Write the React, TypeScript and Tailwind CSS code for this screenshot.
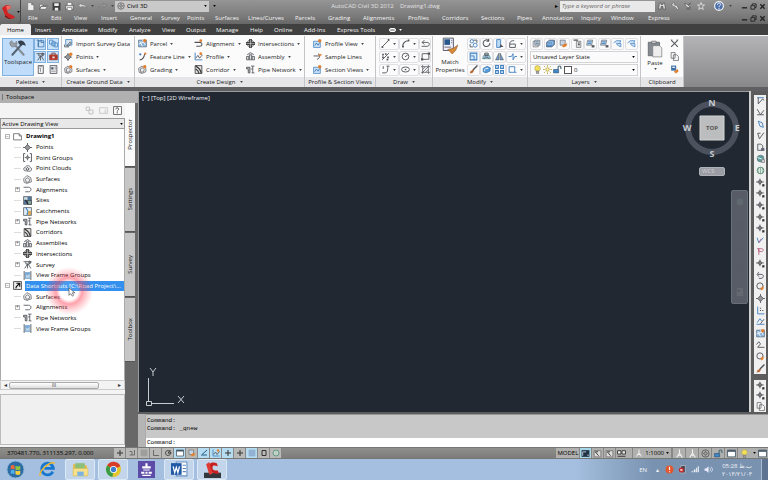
import React from "react";

const K = "#50545a";
const B = "#3f7fc0";
const O = "#e08030";
const line = { fill: "none", stroke: K, strokeWidth: 1.6 };
const blue = { fill: "none", stroke: B, strokeWidth: 1.6 };

const glyphs: Record<string, React.ReactNode> = {
  new: <path d="M3 1h7l4 4v10H3z M10 1v4h4" fill="#eee" stroke="#666" />,
  open: <path d="M1 13V4h5l1 2h6v2H4zM1 13h11l3-6H4z" fill="#eee" stroke="#555" />,
  save: <g><path d="M1 1h14v14H1z" fill="#3c3c3c" /><path d="M4 2h8v5H4zM5 10h6v5H5z" fill="#eee" /></g>,
  print: <g><path d="M1 6h14v7H1z" fill="#ddd" stroke="#444" /><path d="M4 1h8v5H4zM4 10h8v5H4z" fill="#fff" stroke="#555" /></g>,
  undo: <path d="M1 6l5-4v2.500c5 0 8 2 9 6-2-2-5-3-9-2.500V10z" fill="#ddd" stroke="#555" strokeWidth=".6" />,
  redo: <path d="M15 6l-5-4v2.500c-5 0-8 2-9 6 2-2 5-3 9-2.500V10z" fill="#999" stroke="#666" strokeWidth=".6" />,
  gear: <g fill="none" stroke="#555" strokeWidth="1.400"><circle cx="8" cy="8" r="6.500" /><circle cx="8" cy="8" r="2.500" /><path d="M8 3v2M8 11v2M3 8h2M11 8h2" /></g>,
  binoculars: <path d="M3 2h3v3h4V2h3l2 12h-5v-5H6v5H1z" fill="#ddd" stroke="#333" />,
  key: <path d="M2 5a4 4 0 0 1 6-3L6 5l2 2 3-1 4 7-2 2-6-6a4 4 0 0 1-5-4z" fill="#ddd" stroke="#444" strokeWidth=".8" />,
  dish: <path d="M2 2c0 7 5 10 11 9L9 7l4-5-5 4zM5 14h8" fill="#ddd" stroke="#333" />,
  star: <path d="M8 1l2 5h5l-4 3.500 1.500 5.500L8 12l-4.500 3L5 9.500 1 6h5z" fill="none" stroke="#eee" strokeWidth="1.500" />,
  help: <g><circle cx="8" cy="8" r="7" fill="#4a6ea8" stroke="#eee" strokeWidth="2" /><path d="M5.500 6c0-4 6-3 5 0-.5 1.500-2.500 1.500-2.500 4M8 11.500v2" stroke="#fff" strokeWidth="1.600" fill="none" /></g>,
  min: <path d="M2 11h12" stroke="#222" strokeWidth="3" />,
  restore: <path d="M5 5V2h9v8h-3M2 6h9v8H2z" fill="none" stroke="#222" strokeWidth="2" />,
  close: <path d="M3 3l10 10M13 3L3 13" stroke="#222" strokeWidth="3" />,
  tools: <g strokeLinecap="round"><path d="M5 5l8 9" stroke="#878f98" strokeWidth="2" /><path d="M2 1.500a3 3 0 0 0 3.500 5 3 3 0 0 0 1-4.500L5.500 4 4 3.500z" fill="#98a0a9" stroke="#666" strokeWidth=".4" /><path d="M11 5L3 14" stroke="#566170" strokeWidth="1.800" /><path d="M8 2c3-1.500 6 0 7 4l-3-1-1.500 1-2-2z" fill="#34404e" /></g>,
  survey: <g><path d="M3 1h11v10H3z" fill="#dce9f5" stroke={B} strokeWidth="1.400" /><path d="M5 12l6-7 2 2-5 6zM1 10v4h8" fill="none" stroke={K} strokeWidth="1.500" /></g>,
  panel: <g><path d="M4 3h10v11H4z" fill="#c8e0f6" stroke={B} strokeWidth="1.500" /><path d="M1 2h4v4M4 6v8M9 1v5h5" fill="none" stroke="#36679a" strokeWidth="1.500" /></g>,
  panel2: <g><path d="M1 2h6v7H1zM5 5h6v7H5zM9 7h6v7H9z" fill="#d4e7f8" stroke={B} strokeWidth="1.400" /></g>,
  transit: <g stroke={K} strokeWidth="1.500" fill="none"><path d="M1 3h14M5 3v4h7V2M8 7L3 15M9 7l5 8M8 7v8" /><circle cx="12" cy="4" r="2" fill="#888" /></g>,
  toolbox: <g><path d="M1 5h14v9H1z" fill="#c5372c" stroke="#842" /><path d="M5 5V2h6v3M1 9h14" fill="none" stroke="#733" strokeWidth="1.500" /><path d="M6 8h4v3H6z" fill="#eee" /></g>,
  book: <g><path d="M4 1h9v14H4z" fill="#f4f4f4" stroke={K} strokeWidth="1.500" /><path d="M6 3h5M6 6h2v6" stroke={K} fill="none" /></g>,
  sheet: <g><path d="M2 1h12v14H2z" fill="#eee" stroke="#556" strokeWidth="1.500" /><path d="M4 4h4v4H4z" fill="#456" /><path d="M10 4h3M10 7h3M4 11h8" stroke="#556" /></g>,
  points: <g><path d="M8 0v16M0 8h16" stroke={K} strokeWidth="1.500" /><path d="M8 3l5 5-5 5-5-5z" fill="#999" stroke={K} strokeWidth="1.600" /></g>,
  pointsnew: <g><path d="M7 2v14M0 9h14" stroke={K} strokeWidth="1.500" /><path d="M7 4l5 5-5 5-5-5z" fill="#999" stroke={K} strokeWidth="1.500" /><circle cx="12" cy="4" r="3" fill={O} /></g>,
  surface: <path d="M1 7l6-6 7 4 1 7-8 3-5-2zM4 8l4-3 4 3-1 4-5 1z" fill="#f2f2f2" stroke={K} strokeWidth="1.200" />,
  surfacenew: <g><path d="M1 6l6-4 7 4v6l-7 3-5-2zM4 7l4-2 3 3-1 4-5 1z" fill="#eee" stroke={K} strokeWidth="1.200" /><circle cx="12" cy="3" r="3" fill={O} /></g>,
  parcel: <g><path d="M1 2h14v12H1z" fill="#8db5dc" stroke="#456" /><path d="M3 4l5 9M8 2l5 9M1 9l12-5" stroke="#fff" strokeWidth="1.500" /><circle cx="12" cy="3" r="3" fill={O} /></g>,
  feature: <g><path d="M3 14c6 0 8-5 9-11" fill="none" stroke={K} strokeWidth="1.800" /><circle cx="4" cy="4" r="2" fill={B} /><circle cx="13" cy="3" r="2" fill={O} /></g>,
  align: <path d="M1 4h9c6 0 5 8 0 8H4" fill="none" stroke={K} strokeWidth="1.500" />,
  alignnew: <g><path d="M1 6h9c6 0 5 7 0 7H4" {...line} strokeWidth="1.800" /><circle cx="12" cy="3" r="2.500" fill={O} /></g>,
  profile: <g><path d="M2 1v13h13" {...blue} /><path d="M3 11l4-5 3 5 5-6" {...line} /><circle cx="12" cy="3" r="2.500" fill={O} /></g>,
  corridor: <g><path d="M2 1h12v14H2z" fill="#ddd" stroke="#444" strokeWidth="1.500" /><path d="M3 2c6 3 9 7 10 13M3 7c4 2 5 4 6 8" stroke="#333" strokeWidth="2" fill="none" /></g>,
  intersection: <g><circle cx="8" cy="8" r="6" fill="none" stroke="#666" strokeWidth="1.500" /><path d="M8 0v16M0 8h16" stroke="#444" strokeWidth="5" /><path d="M8 1v14M1 8h14" stroke="#ddd" strokeWidth="1" /></g>,
  assembly: <g><path d="M1 14V8h4v6zM6 14V5h4v9zM11 14V8h4v6zM2 5l6-4 6 4" fill="#ddd" stroke={K} strokeWidth="1.400" /></g>,
  pipes: <path d="M1 4h6v10H4V7H1zM9 2h6M12 2v12M9 7h3M10 14h5" fill="#bbb" stroke={K} strokeWidth="1.500" />,
  profileview: <g><path d="M1 4h12v11H1z" fill="#cfe3f7" stroke={B} strokeWidth="1.300" /><path d="M3 12l3-5 3 4 3-5" {...blue} /><circle cx="12" cy="3" r="3" fill={O} /></g>,
  sample: <g><path d="M1 7h11M9 3c4 1 4 9-2 10" {...line} /><path d="M10 5h5" stroke={O} strokeWidth="3" /></g>,
  line: <g><path d="M2 14L14 2" {...line} /><path d="M1 13h3v3H1zM12 0h3v3h-3z" fill={K} /></g>,
  arc: <g><path d="M3 14C3 6 7 3 14 3" {...line} strokeWidth="2" /><path d="M2 12h3v3H2zM12 1h3v3h-3z" fill={K} /></g>,
  poly: <path d="M1 13h10c5 0 5-7 0-7H2l4-4M2 6l4 4" {...line} />,
  scatter: <g><path d="M2 14L14 2" {...line} /><path d="M2 3h3v3H2zM7 2h3v3H7zM2 8h3v3H2zM11 8h3v3h-3zM10 12h3v3h-3z" fill={K} /></g>,
  circle: <g><circle cx="8" cy="8" r="6" {...line} /><circle cx="8" cy="8" r="1" fill={K} /><path d="M8 8l4-3" {...line} /></g>,
  rect: <g><path d="M2 3h12v10H2z" {...line} /><path d="M0 11h4v4H0zM12 1h4v4h-4z" fill={K} /></g>,
  curve: <path d="M2 14h5c5 0 5-5 5-12M4 2v5M10 2h5" {...line} />,
  ellipse: <g><ellipse cx="8" cy="8" rx="7" ry="4.500" {...line} /><circle cx="8" cy="8" r="1.500" fill={K} /></g>,
  hatch: <path d="M3 0v16M13 0v16M0 3h16M0 13h16M3 8l5-5M3 13L13 3M8 13l5-5" {...line} strokeWidth="1.300" />,
  match: <g><path d="M2 1h9v11H2z" fill="#eef" stroke={K} strokeWidth=".8" /><path d="M3 2h5v5H3z" fill="#28588c" /><path d="M9 3h1M9 5h1M3 9h6" stroke={K} strokeWidth=".7" /><path d="M6 11l5-1 4-3-2 5-3 3-2-2z" fill="#d78a35" stroke="#853" strokeWidth=".5" /></g>,
  move: <g><circle cx="5" cy="4" r="3" {...blue} /><circle cx="11" cy="11" r="3.500" {...blue} /><path d="M8 2h6v5M2 9v5h5" {...line} /></g>,
  rotate: <path d="M12 3a6 6 0 1 0 2 4M12 0v4H8" {...line} strokeWidth="1.800" />,
  trim: <g><path d="M3 1h7v14H3z" fill="#bcdcf6" stroke={B} strokeWidth="1.500" /><path d="M10 9l5 5H8z" fill={K} /></g>,
  stretch: <g><path d="M2 2h12v12H2z" fill="#d5e9fa" stroke={B} strokeWidth="1.800" /><path d="M2 7h7v7" {...blue} /></g>,
  copy: <g><path d="M1 12c1-6 3-8 7-8s6 2 7 8z" fill="#9fc5e8" stroke="#376" /><path d="M4 12c0-4 8-4 8 0M5 6h6V2H5z" {...line} /></g>,
  mirror: <path d="M7 2L1 14h6zM9 2l6 12H9z" fill="#6f9cc8" stroke={K} />,
  brush: <g><path d="M15 1L7 9" stroke={K} strokeWidth="2.500" /><path d="M7 8l2 2-3 4-5 1 2-4z" fill="#b86835" /></g>,
  offset: <g><path d="M2 6l7-4 6 3-1 6-7 3-5-2z" fill="#5a9bd8" stroke="#2465a0" /><path d="M4 11c0-5 4-5 7-5" stroke="#fff" fill="none" strokeWidth="1.500" /></g>,
  array: <path d="M1 1h5v5H1zM10 1h5v5h-5zM1 10h5v5H1zM10 10h5v5h-5z" fill="#cfe5f8" stroke={B} strokeWidth="1.800" />,
  fillet: <g><path d="M3 15V9c0-5 3-6 8-6M3 9h10v6H3" {...line} /></g>,
  breakl: <path d="M1 8h5l3-5v11l3-6h4" {...blue} />,
  box: <path d="M2 3h10v10H2zM12 13h3" {...blue} />,
  layers: <g><path d="M2 4h9v10H2z" fill="#e7edf3" stroke={K} /><path d="M5 2h9v9H5z" fill="#b9cfe4" stroke={K} /><path d="M7 5h5M7 8h5" stroke={K} /></g>,
  layerb: <g><path d="M1 6l5-4h9v8l-5 4H1z" fill="#5b91c9" stroke="#345" /><path d="M4 5h8v6M2 9h8" stroke="#d5e7f8" fill="none" /></g>,
  layero: <g><path d="M2 2h9v9H2z" fill="#c5d4e2" stroke={K} /><path d="M5 12l4-3 6-1-2 5-5 2z" fill={O} /></g>,
  layerp: <g><path d="M6 4h8v11H6z" fill="#ddd" stroke={K} /><path d="M1 2h8M9 7h3M9 10h3" stroke={K} strokeWidth="2" /></g>,
  layera: <g><path d="M3 2h9l-2 9H1z" fill="#b9cfe4" stroke={K} /><path d="M4 5h6M3 8h6" stroke={B} strokeWidth="1.500" /><path d="M10 11h5v4h-5z" fill={K} /></g>,
  layerl: <g><path d="M1 7l5-4h8l-2 4M6 8h8v6l-6-3z" fill="#cfe3f7" stroke={B} strokeWidth="1.300" /></g>,
  bulb: <g><circle cx="8" cy="6" r="5" fill="#f5df55" stroke="#997" /><path d="M6 11h4v4H6z" fill="#aaa" stroke="#666" /></g>,
  sun: <g stroke="#b8a13c" strokeWidth="1.500"><circle cx="8" cy="8" r="3" fill="#fff7b0" /><path d="M8 0v3M8 13v3M0 8h3M13 8h3M2 2l2 2M12 12l2 2M14 2l-2 2M4 12l-2 2" /></g>,
  lock: <g><path d="M1 8h9v6H1z" fill="#3e88c8" stroke="#246" /><path d="M9 8V4c0-3 5-3 5 0v3" fill="none" stroke="#467" strokeWidth="2" /></g>,
  paste: <g><path d="M2 2h10v12H2z" fill="#858b92" stroke="#555" strokeWidth=".6" /><path d="M5 1h4v2H5z" fill="#ccc" stroke="#555" strokeWidth=".5" /><path d="M6 5h6l2 2v8H6z" fill="#eee" stroke="#777" strokeWidth=".6" /></g>,
  cut: <g><path d="M2 2l12 12M14 2L2 14" stroke={K} strokeWidth="1.800" /><path d="M1 1h3v3M15 1h-3v3" fill="none" stroke="#999" /></g>,
  copies: <path d="M2 1h7v10H2zM6 5h6l3 3v7H6z" fill="#fafafa" stroke={K} strokeWidth="1.200" />,
  pastes: <g><path d="M2 1h9v9H2z" fill="#3d70a8" /><path d="M4 3h5v2H4z" fill="#fff" /><path d="M7 11l7-4 1 5-5 3z" fill={O} /></g>,
  doc: <path d="M1 3h10l4 4v7H1zM11 3v4h4" fill="#fff" stroke="#555" strokeWidth="1.300" />,
  group: <g><path d="M4 1H1v14h3M12 1h3v14h-3" {...line} /><path d="M8 3v10M3 8h10" stroke={K} strokeWidth="1.300" /><path d="M8 5l3 3-3 3-3-3z" fill="#888" stroke={K} /></g>,
  cloud: <g><path d="M3 12c-3-2-2-6 1-6 1-4 8-4 9 0 3 1 3 5 0 7z" fill="#eee" stroke={K} strokeWidth="1.300" /><path d="M5 9l3-3 3 3-3 2z" {...line} /></g>,
  sites: <g><path d="M1 1h14v14H1z" fill="#54779c" stroke="#444" /><path d="M2 2h6v5H2z" fill="#cdd" /><path d="M8 8h7v7H8z" fill="#86a7a0" stroke="#333" /><path d="M4 7l5 7" stroke="#222" strokeWidth="2" /></g>,
  catchment: <g><path d="M1 1h14v14H1z" fill="#dcecf8" stroke="#555" strokeWidth="1.300" /><path d="M5 1l4 7-2 6" fill="none" stroke={B} strokeWidth="2" /><path d="M9 7h5v7H9z" fill="#d9a44a" /></g>,
  frame: <g><path d="M3 2h10v12H3z" fill="#7ba9d4" /><path d="M5 6l3 2 4-3v7H5z" fill="#bcd3e8" /><path d="M2 0v16M14 0v16" stroke="#555" strokeWidth="1.500" /></g>,
  shortcut: <g><path d="M1 1h14v14H1z" fill="#eee" stroke="#444" strokeWidth="1.500" /><path d="M6 4h6v6M12 4l-6 6-1 3" fill="none" stroke="#111" strokeWidth="2" /></g>,
  helpbox: <g><path d="M1 1h14v14H1z" fill="#fff" stroke="#555" strokeWidth="1.500" /><path d="M5 6c0-4 6-3 5 0-.5 1.500-2.500 1.500-2.500 4M7.500 11v2" stroke="#333" strokeWidth="1.600" fill="none" /></g>,
  faded: <path d="M2 2h6v6H2zM7 7h7v7H7z" fill="none" stroke="#bbb" strokeWidth="1.500" />,
  faded2: <path d="M1 3h14v10H1zM11 6v7" fill="none" stroke="#c5c5c5" strokeWidth="1.500" />,
  globe: <g><circle cx="8" cy="8" r="6" fill="#5e9c9b" stroke="#566" /><path d="M3 6c4 3 7 1 9 5" stroke="#cee" strokeWidth="2" fill="none" /><path d="M10 10h5v5h-5z" fill="#ddd" stroke="#555" /></g>,
  globe2: <g><circle cx="8" cy="8" r="6" fill="#dde8dd" stroke="#587" strokeWidth="1.500" /><path d="M8 2v12M5 3c-2 3-2 7 0 10M11 3c2 3 2 7 0 10" stroke="#587" fill="none" /></g>,
  flag: <g><path d="M2 3h12" {...blue} /><path d="M4 3v11l8-9 2 3" {...line} /></g>,
  angle: <path d="M2 2l6 10H2M8 12l6-8M8 12h6" {...line} />,
  tag: <path d="M4 2l7 3 2 8-6-2z" {...blue} />,
  ang2: <path d="M3 4l3 10 8-11M3 4h5" {...line} />,
  page: <g><path d="M3 2h6l3 3v8H3z" fill="#eee" stroke={K} strokeWidth="1.500" /><path d="M9 9h6v5H9z" fill="#667" /></g>,
  pt: <g><path d="M7 1v12M0 7h14" stroke={K} strokeWidth="1.300" /><path d="M7 3l4 4-4 4-4-4z" fill="#777" stroke={K} strokeWidth="1.500" /><path d="M11 11h4v4h-4z" fill="#333" /></g>,
  pen: <g><path d="M2 3l3 9 8-9" {...blue} /><path d="M5 12l4-7" stroke="#b8657d" strokeWidth="1.500" /></g>,
  pink: <path d="M2 3h8c4 0 4 5 0 5H5V3v11" fill="none" stroke="#b8657d" strokeWidth="1.600" />,
  back: <path d="M3 6h6c6 0 5 7 0 7H5M5 2L2 6l3 4" {...line} />,
  dots: <g><path d="M3 1v13h12" {...blue} /><path d="M7 7h2v2H7zM11 7h2v2h-2zM7 3h2v2H7z" fill={K} /></g>,
  zig: <path d="M1 8l4-5 3 4-5 6h12" {...line} />,
  zigb: <g><path d="M1 13h14M2 10l5-7 3 4" {...blue} /><path d="M8 12l6-8" {...line} /></g>,
  palette: <g><circle cx="7" cy="7" r="5.500" {...line} /><path d="M8 10l6-2-1 5-4 2z" fill={O} /></g>,
  plus: <path d="M8 2v12M2 8h12" stroke="#333" strokeWidth="2" />,
  grid: <path d="M2 2h12v12H2zM6 2v12M10 2v12M2 6h12M2 10h12" fill="#a8c8e8" stroke="#6b8bab" strokeWidth=".8" />,
  gridoff: <path d="M2 2h12v12H2zM6 2v12M10 2v12M2 6h12M2 10h12" fill="#aaa" stroke="#888" strokeWidth=".8" />,
  snap: <path d="M13 2v10H3M3 5h5v7" fill="none" stroke="#666" strokeWidth="1.800" />,
  sq: <path d="M4 3h8v10H4z" fill="none" stroke="#333" strokeWidth="2" />,
  ell: <path d="M3 2v11h11" fill="none" stroke="#555" strokeWidth="1.600" />,
  polar: <g><circle cx="8" cy="8" r="5" fill="none" stroke="#444" strokeWidth="1.800" /><path d="M8 8h7M8 8l5-6" stroke="#333" strokeWidth="1.800" /></g>,
  slope: <path d="M14 2L3 12h11" fill="none" stroke="#245a86" strokeWidth="2" />,
  window: <g><path d="M1 2h14v12H1z" fill="#fff" stroke="#456" strokeWidth="1.500" /><path d="M1 2h14v3H1z" fill="#456" /></g>,
  views: <path d="M1 3h6v6H1zM9 3h6v6H9zM1 13h14" fill="#eee" stroke="#333" strokeWidth="1.600" />,
  layout: <g><path d="M2 3h12v11H2z" fill="#ddd" stroke="#666" strokeWidth="1.300" /><path d="M4 5l6 7M4 5h5" stroke="#333" strokeWidth="1.600" fill="none" /></g>,
  dark: <g><path d="M1 2h14v12H1z" fill="#234" /><path d="M3 5h6M3 5v7M11 11h3" stroke="#cde" strokeWidth="1.500" /></g>,
  person: <path d="M8 1v6M8 7L3 15M8 7l5 8M5 11h6" fill="none" stroke="#f4f4f4" strokeWidth="1.800" />,
  ie: <g><path d="M13 10a5.500 5.500 0 1 1 .5-3H5" fill="none" stroke="#1878cf" strokeWidth="2.600" /><path d="M1 14C0 9 10 0 15 2" fill="none" stroke="#eeb629" strokeWidth="1.300" /></g>,
  folder: <g><path d="M1 3h5l1 1h7v10H1z" fill="#e2b94e" /><path d="M3 2h9v6H3z" fill="#8cc07a" /><path d="M1 7h14v7H1z" fill="#f7e08c" stroke="#d7b64a" strokeWidth=".5" /><path d="M5 10h6v4H5z" fill="#7ab3e2" /></g>,
  chrome: <g><circle cx="8" cy="8" r="7" fill="#e4c62e" /><path d="M8 8L2 4.300A7 7 0 0 1 14.500 5z" fill="#d93b2b" /><path d="M8 8L2 4.300A7 7 0 0 0 7 15z" fill="#3a9d46" /><circle cx="8" cy="8" r="3.300" fill="#fff" /><circle cx="8" cy="8" r="2.500" fill="#3d7ed0" /></g>,
  purple: <g><path d="M0 0h16v16H0z" fill="#5d4ba8" /><path d="M7 2h2v3H7zM4 5h8v2H4zM5 8h6v1H5zM3 10h3v2H3zM7 10h2v2H7zM10 10h3v2h-3zM4 13h8v1H4z" fill="#fff" /></g>,
  word: <g><path d="M5 1h10v13H5z" fill="#fff" stroke="#6a91c4" /><path d="M0 2h10v11H0z" fill="#2159a6" /><path d="M2 5l1.500 6L5 6l1.500 5L8 5" fill="none" stroke="#fff" strokeWidth="1.200" /><path d="M11 4h3M11 7h3M11 10h3" stroke="#5a86c0" /></g>,
  acad: <g><path d="M0 11h16v5H0z" fill="#33383d" /><path d="M12 2C7 0 3 3 4 7c1 3 5 5 10 5l-1-3c-4 0-5-1-5-3s2-2 5-1z" fill="#c8201e" /><path d="M2 3l3-2 3 11-3 1z" fill="#e03a34" /></g>,
  logo: <g><path d="M1 4l4-3 5 1-1 3-3 1 1 3 6 3 1 2-4 1-6-4z" fill="#cf2423" /><path d="M5 2l5 0-1 3-3 1z" fill="#ef6a60" /><path d="M4 11l6 4-2 0-4-2z" fill="#8a1010" /></g>,
  alert: <g><circle cx="8" cy="8" r="7" fill="#e2572b" /><path d="M8 3v6M8 11v2" stroke="#fff" strokeWidth="2" /></g>,
  net: <g><path d="M5 1h8v13H5z" fill="#445" stroke="#ddd" /><circle cx="6" cy="9" r="4.500" fill="#c92222" /><path d="M4 7l4 4M8 7l-4 4" stroke="#fff" strokeWidth="1.500" /></g>,
  bars: <path d="M1 13h3v-2H1zM5 13h3V8H5zM9 13h2V5H9zM12 13h2V2h-2z" fill="#e8eef5" />,
  speaker: <g><path d="M1 6h3l4-4v12l-4-4H1z" fill="#eef" /><path d="M10 5c2 2 2 4 0 6M12 3c4 3 4 7 0 10" fill="none" stroke="#eef" strokeWidth="1.300" /></g>,
};

function Glyph({ name, className = "size-2" }: { name: string; className?: string }) {
  return (
    <svg viewBox="0 0 16 16" className={`shrink-0 ${className}`} aria-hidden="true">
      {glyphs[name]}
    </svg>
  );
}

function Caret({ className = "text-[#444]" }: { className?: string }) {
  return (
    <svg viewBox="0 0 4 3" className={`h-[2px] w-[3px] shrink-0 ${className}`} aria-hidden="true">
      <path d="M0 0h4L2 3z" fill="currentColor" />
    </svg>
  );
}

function Cmd({ icon, label, menu = true }: { icon: string; label: string; menu?: boolean }) {
  return (
    <button className="flex h-[13px] items-center gap-[3px] whitespace-nowrap">
      <Glyph name={icon} className="size-[9px]" />
      <span>{label}</span>
      {menu && <Caret />}
    </button>
  );
}

function Panel({ title, width, menu = true, children }: { title: string; width: string; menu?: boolean; children: React.ReactNode }) {
  return (
    <section className={`flex shrink-0 flex-col border-r border-[#c4c4c8] bg-[#fbfbfb] ${width}`}>
      <div className="flex flex-1 items-center overflow-hidden">{children}</div>
      <h2 className="flex h-[10px] items-center justify-center gap-1 whitespace-nowrap bg-[#e6e6e8]">
        {title}
        {menu && <Caret />}
      </h2>
    </section>
  );
}

function Tool({ icon, menu = false }: { icon: string; menu?: boolean }) {
  return (
    <button aria-label={icon} className="flex h-[12px] items-center gap-[2px] rounded-xs border border-[#e0e0e4] px-px">
      <Glyph name={icon} className="size-[9px]" />
      {menu && <Caret className="mx-px text-[#444]" />}
    </button>
  );
}

const menus = ["File", "Edit", "View", "Insert", "General", "Survey", "Points", "Surfaces", "Lines/Curves", "Parcels", "Grading", "Alignments", "Profiles", "Corridors", "Sections", "Pipes", "Annotation", "Inquiry", "Window", "Express"];
const tabs = ["Home", "Insert", "Annotate", "Modify", "Analyze", "View", "Output", "Manage", "Help", "Online", "Add-Ins", "Express Tools"];

function WindowButtons() {
  return (
    <div className="flex items-center gap-[2px]">
      <button aria-label="Minimize"><Glyph name="min" className="size-[7px]" /></button>
      <button aria-label="Restore"><Glyph name="restore" className="size-[7px]" /></button>
      <button aria-label="Close"><Glyph name="close" className="size-[7px]" /></button>
    </div>
  );
}

function Header() {
  return (
    <header className="bg-linear-to-b from-[#959595] via-[#787878] to-[#4a4a4a] text-[#f4f4f4]">
      <div className="flex h-[24px]">
        <button aria-label="Application menu" className="flex w-[21px] items-center justify-center rounded-br-sm border-r border-[#444] bg-linear-to-b from-[#999] to-[#666]">
          <Glyph name="logo" className="size-4" />
          <Caret className="text-black" />
        </button>
        <div className="flex min-w-0 flex-1 flex-col">
          <div className="flex h-[12px] items-center pr-[2px]">
            <div className="flex w-[94px] items-center gap-[4px] pl-[5px]">
              {["new", "open", "save", "print", "undo"].map((n) => (
                <button key={n} aria-label={n}><Glyph name={n} className="size-[9px]" /></button>
              ))}
              <Caret />
              <button aria-label="redo"><Glyph name="redo" className="size-[9px]" /></button>
              <Caret />
            </div>
            <div className="flex h-[11px] w-[94px] items-center gap-[2px] bg-[#c9c9c9] px-[2px] text-black">
              <Glyph name="gear" className="size-[8px]" />
              <select aria-label="Workspace" className="min-w-0 flex-1 appearance-none bg-transparent"><option>Civil 3D</option></select>
              <Caret className="text-black" />
            </div>
            <div className="flex min-w-0 flex-1 items-center">
              <Caret className="ml-[4px] text-black" />
              <h1 className="flex-1 whitespace-pre text-center text-[#e2e2e2]">AutoCAD Civil 3D 2012    Drawing1.dwg</h1>
              <span className="mr-[2px] text-black">▸</span>
            </div>
            <input aria-label="Search" placeholder="Type a keyword or phrase" className="h-[11px] w-[95px] bg-[#e9e9e9] px-[2px] italic text-black placeholder:text-[#666]" />
            <div className="flex w-[86px] items-center gap-[5px] pl-[3px]">
              {["binoculars", "key", "dish", "star"].map((n) => (
                <button key={n} aria-label={n}><Glyph name={n} className="size-[8px]" /></button>
              ))}
              <button aria-label="Help" className="ml-[4px]"><Glyph name="help" className="size-[10px]" /></button>
              <Caret />
            </div>
            <WindowButtons />
          </div>
          <nav className="flex h-[12px] items-center justify-between pr-[2px] pl-[7px]">
            <div className="grid grid-cols-[23px_23px_27px_29px_31px_26px_28px_33px_47px_33px_35px_45px_34px_39px_36px_25px_39px_30px_37px_30px]">
              {menus.map((m) => <button key={m} className="text-left whitespace-nowrap">{m}</button>)}
            </div>
            <WindowButtons />
          </nav>
        </div>
      </div>
      <div role="tablist" className="grid h-[11px] grid-cols-[31px_27px_36px_31px_33px_24px_30px_34px_24px_30px_33px_49px_20px] items-stretch bg-[#404040]">
        {tabs.map((t, i) => (
          <button key={t} role="tab" aria-selected={i === 0} className={i === 0 ? "rounded-t-xs bg-[#ececee] text-black" : "pl-[4px] text-left whitespace-nowrap"}>{t}</button>
        ))}
        <button aria-label="Ribbon display" className="flex items-center justify-end gap-[3px]">
          <span className="h-[4px] w-[7px] rounded-xs border border-white bg-[#aaa]" />
          <Caret className="text-white" />
        </button>
      </div>
    </header>
  );
}

function Ribbon() {
  return (
    <div className="flex h-[52px] border-t border-[#f8f8f8] bg-linear-to-b from-[#b4b4b6] to-[#88888a] text-[#222]">
      <Panel title="Palettes" width="w-[62px]">
        <button className="ml-[2px] flex h-[38px] w-[32px] flex-col items-center justify-between border border-[#7fb0e0] bg-[#bfddfa] pb-[9px]">
          <Glyph name="tools" className="size-[18px]" />
          Toolspace
        </button>
        <div className="grid grid-cols-2 gap-px">
          {["panel", "panel2", "transit", "toolbox", "book", "sheet"].map((n, i) => (
            <button key={n} aria-label={n} className={`flex size-3 items-center justify-center border ${i < 4 ? "border-[#7fb0e0] bg-[#cbe3fa]" : "border-transparent"}`}>
              <Glyph name={n} className="size-[9px]" />
            </button>
          ))}
        </div>
      </Panel>
      <Panel title="Create Ground Data" width="w-[73px]">
        <div className="pl-[2px]">
          <Cmd icon="survey" label="Import Survey Data" menu={false} />
          <Cmd icon="pointsnew" label="Points" />
          <Cmd icon="surfacenew" label="Surfaces" />
        </div>
      </Panel>
      <Panel title="Create Design" width="w-[170px]">
        <div className="grid grid-flow-col grid-cols-[56px_52px_59px] grid-rows-3 pl-[3px]">
          <Cmd icon="parcel" label="Parcel" />
          <Cmd icon="feature" label="Feature Line" />
          <Cmd icon="surfacenew" label="Grading" />
          <Cmd icon="alignnew" label="Alignment" />
          <Cmd icon="profile" label="Profile" />
          <Cmd icon="corridor" label="Corridor" />
          <Cmd icon="intersection" label="Intersections" />
          <Cmd icon="assembly" label="Assembly" />
          <Cmd icon="pipes" label="Pipe Network" />
        </div>
      </Panel>
      <Panel title="Profile & Section Views" width="w-[71px]" menu={false}>
        <div className="pl-[8px]">
          <Cmd icon="profileview" label="Profile View" />
          <Cmd icon="sample" label="Sample Lines" menu={false} />
          <Cmd icon="profileview" label="Section Views" />
        </div>
      </Panel>
      <Panel title="Draw" width="w-[57px]">
        <div className="grid grid-cols-[20px_20px_12px] gap-y-px pl-[3px]">
          <Tool icon="line" menu /><Tool icon="arc" menu /><Tool icon="poly" />
          <Tool icon="scatter" menu /><Tool icon="circle" menu /><Tool icon="rect" />
          <Tool icon="curve" menu /><Tool icon="ellipse" menu /><Tool icon="hatch" />
        </div>
      </Panel>
      <Panel title="Modify" width="w-[95px]">
        <button className="flex w-[34px] flex-col items-center pb-[2px] leading-[8px]">
          <Glyph name="match" className="mb-[3px] size-[18px]" />
          <span>Match</span>
          <span>Properties</span>
        </button>
        <div className="grid grid-cols-[13px_13px_13px_20px] gap-y-px">
          {["move", "rotate", "trim", "fillet", "stretch", "copy", "mirror", "breakl", "brush", "offset", "array", "box"].map((n, i) => (
            <Tool key={n} icon={n} menu={i % 4 === 3} />
          ))}
        </div>
      </Panel>
      <Panel title="Layers" width="w-[113px]">
        <div className="flex w-full flex-col gap-px px-[2px]">
          <div className="flex h-[12px] justify-between">
            {["layers", "layerb", "layero", "layerp", "layera", "layera", "layerl", "layerl"].map((n, i) => <Tool key={i} icon={n} />)}
          </div>
          <div className="flex h-[12px] items-center border border-[#d4d4d8] px-[2px]">
            <select aria-label="Layer state" className="flex-1 appearance-none bg-transparent"><option>Unsaved Layer State</option></select>
            <Caret className="text-black" />
          </div>
          <div className="flex h-[12px] items-center gap-px border border-[#d4d4d8] px-[2px]">
            <Glyph name="bulb" className="size-[9px]" />
            <Glyph name="sun" className="size-[9px]" />
            <Glyph name="lock" className="size-[9px]" />
            <span className="mx-px size-[8px] border border-[#555] bg-white" />
            <select aria-label="Layer" className="flex-1 appearance-none bg-transparent"><option>0</option></select>
            <Caret className="text-black" />
          </div>
        </div>
      </Panel>
      <Panel title="Clipboard" width="w-[43px]" menu={false}>
        <button className="flex w-[28px] flex-col items-center gap-px pb-[3px]">
          <Glyph name="paste" className="size-[18px]" />
          Paste
          <Caret />
        </button>
        <div className="flex flex-col gap-[4px] pl-px">
          {["cut", "copies", "pastes"].map((n) => <button key={n} aria-label={n}><Glyph name={n} className="block size-[9px]" /></button>)}
        </div>
      </Panel>
    </div>
  );
}

type Node = { icon: string; label: string; depth: number; box?: string; selected?: boolean };
const nodes: Node[] = [
  { icon: "doc", label: "Drawing1", depth: 0, box: "−" },
  { icon: "points", label: "Points", depth: 1 },
  { icon: "group", label: "Point Groups", depth: 1 },
  { icon: "cloud", label: "Point Clouds", depth: 1 },
  { icon: "surface", label: "Surfaces", depth: 1 },
  { icon: "align", label: "Alignments", depth: 1, box: "+" },
  { icon: "sites", label: "Sites", depth: 1 },
  { icon: "catchment", label: "Catchments", depth: 1 },
  { icon: "pipes", label: "Pipe Networks", depth: 1, box: "+" },
  { icon: "corridor", label: "Corridors", depth: 1 },
  { icon: "assembly", label: "Assemblies", depth: 1, box: "+" },
  { icon: "intersection", label: "Intersections", depth: 1 },
  { icon: "transit", label: "Survey", depth: 1, box: "+" },
  { icon: "frame", label: "View Frame Groups", depth: 1 },
  { icon: "shortcut", label: "Data Shortcuts [C:\\Road Project\\...", depth: 0, box: "−", selected: true },
  { icon: "surface", label: "Surfaces", depth: 1 },
  { icon: "align", label: "Alignments", depth: 1, box: "+" },
  { icon: "pipes", label: "Pipe Networks", depth: 1 },
  { icon: "frame", label: "View Frame Groups", depth: 1 },
];

function Tree() {
  return (
    <div className="relative flex-1 border-x border-[#aaa] bg-white pt-[2px]">
      <ul className="grid h-[203px] auto-rows-fr">
        {nodes.map((n, i) => (
          <li key={i} className={`flex items-center ${n.depth ? "pl-[13px]" : "pl-[3px]"}`}>
            <span className="flex w-[7px] justify-center">
              {n.box ? (
                <span className="flex size-[5px] items-center justify-center border border-[#b5b5b5] text-[5px] leading-none text-[#556]">{n.box}</span>
              ) : (
                <span className="h-px w-full bg-[#ddd]" />
              )}
            </span>
            <Glyph name={n.icon} className="ml-[2px] size-[9px]" />
            <span className={`ml-[3px] whitespace-nowrap px-px ${n.selected ? "min-w-0 flex-1 overflow-hidden bg-[#3390ee] py-px text-white" : "text-black"} ${i === 0 ? "font-bold" : ""}`}>{n.label}</span>
          </li>
        ))}
      </ul>
      <div className="pointer-events-none absolute top-[138px] left-[44px] size-12 rounded-full bg-[radial-gradient(circle,rgba(255,255,255,0.1)_0,rgba(255,255,255,0.1)_9px,rgba(255,70,90,0.5)_13px,rgba(255,70,90,0.25)_18px,transparent_24px)]" />
      <svg viewBox="0 0 8 12" className="absolute top-[158px] left-[67px] h-[10px] w-[7px]" aria-hidden="true">
        <path d="M1 1v9l2-2 2 3 1.500-1L5 7h3z" fill="#fff" stroke="#444" strokeWidth=".8" />
      </svg>
    </div>
  );
}

function Toolspace() {
  return (
    <aside className="flex w-[138px] shrink-0 flex-col bg-[#686868]">
      <h2 className="flex h-[12px] items-center gap-[3px] bg-[#b0b0b0] pl-[2px] text-black">
        <span className="h-[6px] w-px bg-[#777]" />
        Toolspace
      </h2>
      <div className="flex min-h-0 flex-1">
        <div className="flex w-[125px] flex-col bg-[#f4f4f4]">
          <div className="flex h-[15px] shrink-0 items-center justify-end gap-[5px] pr-[3px]">
            <button aria-label="Preview"><Glyph name="faded" className="block size-[9px]" /></button>
            <button aria-label="Panorama"><Glyph name="faded2" className="block size-[9px]" /></button>
            <button aria-label="Help"><Glyph name="helpbox" className="block size-[9px]" /></button>
          </div>
          <div className="flex h-[11px] shrink-0 items-center border border-[#999] bg-[#e8e8e8] px-px">
            <select aria-label="View" className="min-w-0 flex-1 appearance-none bg-transparent text-black"><option>Active Drawing View</option></select>
            <Caret className="text-black" />
          </div>
          <Tree />
          <div className="flex h-[10px] shrink-0 items-center border border-[#ccc] bg-[#f3f3f3] px-[3px] text-[#333]">
            <span>◂</span>
            <span className="ml-[2px] flex h-[7px] w-[90px] items-center justify-center rounded-xs border border-[#aaa] bg-linear-to-b from-white to-[#ddd] text-[5px] leading-none">III</span>
            <span className="ml-auto">▸</span>
          </div>
          <div className="mt-[4px] mb-[2px] h-[51px] shrink-0 border border-[#bbb] bg-[#f0f0f0]" />
        </div>
        <div role="tablist" className="flex w-[10px] flex-col gap-px">
          {["Prospector", "Settings", "Survey", "Toolbox"].map((t, i) => (
            <button key={t} role="tab" aria-selected={i === 0} className={`flex h-16 items-center justify-center border-b border-[#555] ${i === 0 ? "bg-[#fafafa]" : "bg-[#c6c6c6]"}`}>
              <span className="rotate-180 whitespace-nowrap [writing-mode:vertical-rl]">{t}</span>
            </button>
          ))}
        </div>
      </div>
    </aside>
  );
}

const sideTools = ["flag", "angle", "tag", "ang2", "page", "globe", "globe2", "pt", "pt", "pt", "pt", "pt", "pen", "pink", "pt", "back", "palette", "points", "dots", "zigb", "parcel", "zig", "palette", "brush"];

function Canvas() {
  return (
    <div className="relative min-w-0 flex-1 border-t border-l border-[#9a9a9a] bg-[#212832]">
      <p className="pt-[2px] pl-[3px] text-[#f0f2f4]">[−] [Top] [2D Wireframe]</p>
      <div className="absolute top-[7px] right-[8px] size-[58px]">
        <svg viewBox="0 0 58 58" className="size-full" aria-hidden="true">
          <circle cx="29" cy="29" r="24" fill="none" stroke="#4b525e" strokeWidth="6" />
          <path d="M17 17h24v24H17z" fill="#bcbdbe" stroke="#d4d4d4" />
        </svg>
        <div className="absolute inset-0 grid grid-cols-3 grid-rows-3 place-items-center text-[9px] leading-none font-bold text-[#c6cacf]">
          <span className="col-start-2 mb-[12px]">N</span>
          <span className="col-start-1 row-start-2 mr-[11px]">W</span>
          <span className="col-start-2 row-start-2 text-[6px] text-[#555]">TOP</span>
          <span className="col-start-3 row-start-2 ml-[12px]">E</span>
          <span className="col-start-2 row-start-3 mt-[12px]">S</span>
        </div>
      </div>
      <button className="absolute top-[75px] right-[24px] h-[9px] w-[26px] rounded-xs border border-[#aeb1b6] bg-[#9a9da3] pl-[2px] text-left leading-[7px] text-[#d0d2d5]">WCS</button>
      <div className="absolute top-[98px] right-px flex h-[114px] w-[17px] flex-col items-center justify-around rounded-xs border border-[#696f79] bg-[#575c66]">
        {["globe2", "hatch", "circle", "rotate", "sheet"].map((n) => <Glyph key={n} name={n} className="size-[10px] opacity-10" />)}
      </div>
      <svg viewBox="0 0 42 42" className="absolute bottom-[4px] left-[5px] size-[42px]" fill="none" stroke="#c8ccd0" aria-hidden="true">
        <path d="M4.500 35V12M7 37.500h23M2.500 35.500h5v4h-5zM34 30l6 7M40 30l-6 7M6 2l3 4 3-4M9 6v4" />
      </svg>
    </div>
  );
}

function CommandLine() {
  return (
    <div className="flex h-[35px] shrink-0 border-t-2 border-[#5c5c5c] bg-[#c8c8c8] font-['Liberation_Mono',monospace] text-black">
      <div className="w-[8px] border-r border-[#aaa] bg-[#b5b5b5]" />
      <div className="flex min-w-0 flex-1 flex-col">
        <div className="flex-1 border-t border-[#999] pt-[2px] pl-px leading-[8px]">
          <p>Command:</p>
          <p>Command: _qnew</p>
        </div>
        <label className="flex h-[9px] items-center bg-white pt-px pl-px">
          Command:
          <input aria-label="Command" className="min-w-0 flex-1" />
        </label>
      </div>
    </div>
  );
}

function StatusBar() {
  return (
    <footer className="flex h-[12px] shrink-0 items-center border-y border-[#777] bg-linear-to-b from-[#8f8f8c] to-[#7c7c7a] text-black">
      <span className="w-[114px] pl-[7px]">370481.770, 311135.297, 0.000</span>
      <div className="flex h-full">
        {["plus", "snap", "gridoff", "ell", "polar", "window", "layero", "slope", "profile", "plus", "plus", "grid", "sq", "globe2"].map((n, i) => (
          <button key={i} aria-label={n} className={`flex w-[12px] items-center justify-center border-r border-[#888] ${[5, 7, 8, 9, 11].includes(i) ? "bg-[#b5dcf0]" : "bg-[#b9b9b7]"}`}>
            <Glyph name={n} className="size-[8px]" />
          </button>
        ))}
      </div>
      <div className="ml-auto flex h-full items-center bg-[#b0b0ae]">
        <button className="px-px">MODEL</button>
        {["dark", "layout", "layout", "views"].map((n, i) => (
          <button key={i} aria-label={n} className={`flex h-full w-[12px] items-center justify-center border-l border-[#888] ${i ? "" : "bg-[#a7d8e8]"}`}><Glyph name={n} className="size-[9px]" /></button>
        ))}
        <button className="ml-[5px] flex h-full items-center gap-[2px] border-x border-[#888] px-[2px]">
          <Glyph name="person" />1:1000<Caret className="text-black" />
        </button>
        {["person", "person", "gear", "lock", "window", "bulb"].map((n, i) => (
          <button key={i} aria-label={n} className="flex h-full w-[13px] items-center justify-center border-l border-[#888]"><Glyph name={n} className="size-[9px]" /></button>
        ))}
        <button aria-label="Status menu" className="flex w-[8px] justify-center"><Caret className="text-black" /></button>
        <button aria-label="Clean screen" className="pr-px"><Glyph name="window" className="block size-[9px]" /></button>
      </div>
    </footer>
  );
}

function StartOrb() {
  return (
    <svg viewBox="0 0 20 20" className="size-[19px]" aria-hidden="true">
      <circle cx="10" cy="10" r="9" fill="#2c6ba3" stroke="#8fb8d8" />
      <path d="M5 6c2-1 3-1 4 0v4c-2-1-3-1-4 0z" fill="#ef6a36" />
      <path d="M10 6c2 1 3 1 5 0v4c-2 1-3 1-5 0z" fill="#8fc63e" />
      <path d="M5 11c2-1 3-1 4 0v4c-2-1-3-1-4 0z" fill="#4db0ea" />
      <path d="M10 11c2 1 3 1 5 0v4c-2 1-3 1-5 0z" fill="#fbd13c" />
    </svg>
  );
}

function Taskbar() {
  return (
    <nav className="flex h-[21px] shrink-0 items-center bg-linear-to-r from-[#a4bfdf] from-75% to-[#7992b0] to-85% text-[#f2f5f9]">
      <button aria-label="Start" className="flex w-[30px] justify-center"><StartOrb /></button>
      <div className="flex h-full items-stretch gap-[3px] pl-[2px]">
        {["ie", "folder", "chrome", "purple", "word", "acad"].map((n) => (
          <button key={n} aria-label={n} className={`flex w-[30px] items-center justify-center ${n === "ie" || n === "purple" ? "" : "rounded-xs border border-[#dbe8f6] bg-[#c2d5ea]"}`}>
            <Glyph name={n} className="size-[17px]" />
          </button>
        ))}
      </div>
      <div className="ml-auto flex h-full items-center gap-[4px]">
        <span className="mr-[5px]">EN</span>
        <span className="mr-[2px]">▴</span>
        {["alert", "net", "bars", "speaker"].map((n) => <button key={n} aria-label={n}><Glyph name={n} className="block size-[9px]" /></button>)}
        <time className="flex w-[40px] flex-col items-center leading-[8px]">
          <span>05:28 ب.ظ</span>
          <span>۲۰۱۳/۲۱/۰۳</span>
        </time>
        <button aria-label="Show desktop" className="h-full w-[7px] border-l border-[#aabbd0] bg-[#5d7391]" />
      </div>
    </nav>
  );
}

export default function App() {
  return (
    <div className="flex h-screen flex-col overflow-hidden bg-[#606062] font-['Open_Sans','DejaVu_Sans',sans-serif] text-[6px] leading-[8px] text-[#111]">
      <Header />
      <Ribbon />
      <main className="flex min-h-0 flex-1 pt-[4px]">
        <Toolspace />
        <div className="flex min-w-0 flex-1 flex-col">
          <div className="flex min-h-0 flex-1">
            <Canvas />
            <div className="flex w-[19px] flex-col gap-[6px] border-l-2 border-[#d0d0d0] bg-[#5c5c5c] pt-[4px] pr-[2px] pl-[3px]">
              <div className="flex flex-1 flex-col items-center justify-around bg-[#f0f0f0]">
                {sideTools.map((n, i) => <button key={i} aria-label={n}><Glyph name={n} className="block size-[9px]" /></button>)}
              </div>
              <div className="flex h-[32px] flex-col items-center justify-around bg-[#f0f0f0]">
                {["pt", "pt", "copies"].map((n, i) => <button key={i} aria-label={n}><Glyph name={n} className="block size-[9px]" /></button>)}
              </div>
            </div>
          </div>
          <CommandLine />
        </div>
      </main>
      <StatusBar />
      <Taskbar />
    </div>
  );
}
